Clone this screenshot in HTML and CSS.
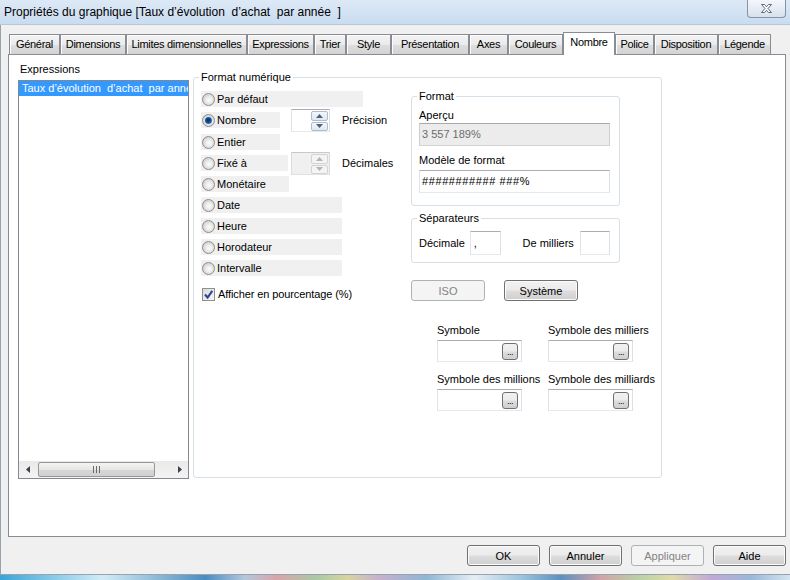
FILE: index.html
```html
<!DOCTYPE html>
<html lang="fr">
<head>
<meta charset="utf-8">
<title>Propriétés du graphique</title>
<link rel="stylesheet" href="styles.css">
</head>
<body>
<div class="window">
  <div class="titlebar">
    <span class="title">Propriétés du graphique [Taux d’évolution  d’achat  par année  ]</span>
    <button class="close" aria-label="Fermer">
      <svg width="13" height="11" viewBox="0 0 13 11"><path d="M1.5 1.5h3l2 2.3 2-2.3h3l-3.5 4 3.5 4h-3l-2-2.3-2 2.3h-3l3.5-4z" fill="#ffffff" stroke="#5b6b80" stroke-width="1" stroke-linejoin="round"/></svg>
    </button>
  </div>

  <div class="client">
    <div class="tabs">
      <div class="tab t-gen">Général</div>
      <div class="tab t-dim">Dimensions</div>
      <div class="tab t-lim">Limites dimensionnelles</div>
      <div class="tab t-exp">Expressions</div>
      <div class="tab t-tri">Trier</div>
      <div class="tab t-sty">Style</div>
      <div class="tab t-pre">Présentation</div>
      <div class="tab t-axe">Axes</div>
      <div class="tab t-cou">Couleurs</div>
      <div class="tab t-nom active">Nombre</div>
      <div class="tab t-pol">Police</div>
      <div class="tab t-dis">Disposition</div>
      <div class="tab t-leg">Légende</div>
    </div>

    <div class="panel">
      <div class="expr-col">
        <div class="lbl">Expressions</div>
        <div class="listbox">
          <div class="items">
            <div class="item sel">Taux d’évolution  d’achat  par année</div>
          </div>
          <div class="hscroll">
            <span class="sarrow"><svg width="4" height="7" viewBox="0 0 4 7"><path d="M4 0v7L0 3.5z" fill="#404040"/></svg></span>
            <span class="thumb"><svg width="7" height="7" viewBox="0 0 7 7"><path d="M0.5 0v7M3.5 0v7M6.5 0v7" stroke="#6a6a6a" stroke-width="1"/></svg></span>
            <span class="track"></span>
            <span class="sarrow"><svg width="4" height="7" viewBox="0 0 4 7"><path d="M0 0v7l4-3.5z" fill="#404040"/></svg></span>
          </div>
        </div>
      </div>

      <fieldset class="group main">
        <legend>Format numérique</legend>
        <div class="main-body">
          <div class="radios">
            <div class="row"><label class="opt w162"><span class="radio"></span>Par défaut</label></div>
            <div class="row spinrow">
              <label class="opt w79"><span class="radio on"></span>Nombre</label>
              <span class="spin">
                <span class="spin-btns">
                  <span class="sbtn"><svg width="7" height="4" viewBox="0 0 7 4"><path d="M0 4h7L3.5 0z" fill="#4d6185"/></svg></span>
                  <span class="sbtn"><svg width="7" height="4" viewBox="0 0 7 4"><path d="M0 0h7L3.5 4z" fill="#4d6185"/></svg></span>
                </span>
              </span>
              <span class="side">Précision</span>
            </div>
            <div class="row"><label class="opt w79"><span class="radio"></span>Entier</label></div>
            <div class="row spinrow">
              <label class="opt w87"><span class="radio"></span>Fixé à</label>
              <span class="spin disabled">
                <span class="spin-btns">
                  <span class="sbtn"><svg width="7" height="4" viewBox="0 0 7 4"><path d="M0 4h7L3.5 0z" fill="#b4b4b4"/></svg></span>
                  <span class="sbtn"><svg width="7" height="4" viewBox="0 0 7 4"><path d="M0 0h7L3.5 4z" fill="#b4b4b4"/></svg></span>
                </span>
              </span>
              <span class="side">Décimales</span>
            </div>
            <div class="row"><label class="opt w88"><span class="radio"></span>Monétaire</label></div>
            <div class="row"><label class="opt w141"><span class="radio"></span>Date</label></div>
            <div class="row"><label class="opt w141"><span class="radio"></span>Heure</label></div>
            <div class="row"><label class="opt w141"><span class="radio"></span>Horodateur</label></div>
            <div class="row"><label class="opt w141"><span class="radio"></span>Intervalle</label></div>
            <label class="check">
              <span class="cbox"><svg width="11" height="11" viewBox="0 0 11 11"><path d="M2 5.5l2.6 3L9.3 1.8" fill="none" stroke="#2a4694" stroke-width="2.1"/></svg></span>
              Afficher en pourcentage (%)
            </label>
          </div>

          <div class="right">
            <fieldset class="group fmt">
              <legend>Format</legend>
              <div class="flbl">Aperçu</div>
              <div class="tb ro">3 557 189%</div>
              <div class="flbl second">Modèle de format</div>
              <div class="tb pattern">########### ###%</div>
            </fieldset>

            <fieldset class="group sep">
              <legend>Séparateurs</legend>
              <div class="sep-row">
                <span class="sep-l1">Décimale</span>
                <span class="tb small w31">,</span>
                <span class="sep-l2">De milliers</span>
                <span class="tb small w30"></span>
              </div>
            </fieldset>

            <div class="btn-row">
              <button class="btn" disabled>ISO</button>
              <button class="btn">Système</button>
            </div>

            <div class="symbols">
              <div class="sym">
                <div class="slbl">Symbole</div>
                <div class="tb symbox"><span class="dots">...</span></div>
              </div>
              <div class="sym">
                <div class="slbl">Symbole des milliers</div>
                <div class="tb symbox"><span class="dots">...</span></div>
              </div>
              <div class="sym">
                <div class="slbl">Symbole des millions</div>
                <div class="tb symbox"><span class="dots">...</span></div>
              </div>
              <div class="sym">
                <div class="slbl">Symbole des milliards</div>
                <div class="tb symbox"><span class="dots">...</span></div>
              </div>
            </div>
          </div>
        </div>
      </fieldset>
    </div>

    <div class="footer">
      <button class="btn fbtn">OK</button>
      <button class="btn fbtn">Annuler</button>
      <button class="btn fbtn" disabled>Appliquer</button>
      <button class="btn fbtn">Aide</button>
    </div>
  </div>
</div>
<div class="taskbar"></div>
</body>
</html>
```

FILE: styles.css
```css
* { box-sizing: border-box; }
html, body { margin: 0; padding: 0; }
body {
  width: 790px;
  height: 580px;
  overflow: hidden;
  background: #f0f0f0;
  font-family: "Liberation Sans", Arial, sans-serif;
  font-size: 11px;
  color: #000;
}

.window { height: 575px; display: flex; flex-direction: column; }

/* title bar */
.titlebar {
  height: 25px;
  flex: none;
  display: flex;
  justify-content: space-between;
  align-items: flex-start;
  background: linear-gradient(#dde9f6, #c9dcf0);
  border-bottom: 1px solid #b9c6d4;
}
.title { font-size: 12px; line-height: 24px; padding-left: 4px; white-space: pre; }
.close {
  width: 39px;
  height: 18px;
  margin-right: 4px;
  padding: 0;
  border: 1px solid #8394aa;
  border-top: none;
  border-radius: 0 0 4px 4px;
  background: linear-gradient(#f4f7fb, #d7e1ec);
  display: flex;
  align-items: center;
  justify-content: center;
}

.client {
  flex: 1;
  display: flex;
  flex-direction: column;
  box-shadow: inset 1px 0 0 #9aa3ad;
  border-bottom: 1px solid #9aa3ad;
}

/* tabs */
.tabs { height: 29px; display: flex; align-items: flex-end; padding-left: 9px; }
.tab {
  height: 20px;
  line-height: 19px;
  padding: 0;
  text-align: center;
  border: 1px solid #898c95;
  border-bottom: none;
  background: linear-gradient(#f3f3f3, #ebebeb 50%, #dedede 51%, #d3d3d3);
  box-shadow: inset 1px 1px 0 #fcfcfc;
  white-space: nowrap;
  letter-spacing: -0.3px;
}
.tab.active {
  height: 23px;
  line-height: 18px;
  margin-bottom: -1px;
  background: #fff;
  box-shadow: none;
  position: relative;
  z-index: 1;
}
.t-gen { width: 51px; }
.t-dim { width: 66px; }
.t-lim { width: 121px; }
.t-exp { width: 67px; }
.t-tri { width: 32px; }
.t-sty { width: 45px; }
.t-pre { width: 78px; }
.t-axe { width: 39px; }
.t-cou { width: 55px; }
.t-nom { width: 52px; }
.t-pol { width: 39px; }
.t-dis { width: 64px; }
.t-leg { width: 53px; }

/* panel */
.panel {
  height: 483px;
  margin: 0 4px 0 8px;
  border: 1px solid #898c95;
  background: #fff;
  display: flex;
  align-items: flex-start;
  padding: 7px 0 0 9px;
}
.expr-col { width: 171px; }
.lbl { line-height: 14px; padding-left: 2px; }
.listbox {
  margin-top: 4px;
  height: 399px;
  border: 1px solid #828790;
  display: flex;
  flex-direction: column;
}
.items { flex: 1; overflow: hidden; }
.item { line-height: 15px; padding-left: 3px; white-space: pre; overflow: hidden; }
.item.sel { background: #3399ff; color: #fff; }
.hscroll { height: 17px; display: flex; align-items: center; background: linear-gradient(#e9e9e9, #f3f3f3); }
.sarrow { width: 17px; height: 17px; display: flex; align-items: center; justify-content: center; }
.thumb {
  width: 117px;
  height: 15px;
  margin-left: 2px;
  border: 1px solid #979797;
  border-radius: 2px;
  background: linear-gradient(#f4f4f4, #e6e6e6 50%, #d6d6d6 51%, #d0d0d0);
  display: flex;
  align-items: center;
  justify-content: center;
}
.track { flex: 1; }

/* group boxes */
.group {
  margin: 0;
  min-width: 0;
  border: 1px solid #d5dfe5;
  border-radius: 3px;
}
.group legend { line-height: 14px; padding: 0 2px; margin-left: -2px; }
.main {
  width: 469px;
  height: 408px;
  margin: 8px 0 0 4px;
  padding: 5px 0 0 7px;
}
.main-body { display: flex; align-items: flex-start; }

.radios { width: 210px; margin-top: 2px; }
.row { height: 16px; margin-bottom: 5px; display: flex; align-items: center; }
.radios .row:nth-child(2) { margin-bottom: 6px; }
.spinrow { display: grid; grid-template-columns: 90px 50px auto; grid-template-rows: 16px; align-items: center; }
.opt {
  height: 16px;
  display: flex;
  align-items: center;
  gap: 2px;
  padding-left: 1px;
  background: #f0f0f0;
  white-space: nowrap;
}
.w162 { width: 162px; }
.w79 { width: 79px; }
.w87 { width: 87px; }
.w88 { width: 88px; }
.w141 { width: 141px; }

.radio {
  width: 13px;
  height: 13px;
  flex: none;
  border-radius: 50%;
  border: 1px solid #8e8f8f;
  background: radial-gradient(circle at 55% 55%, #fdfdfd 0, #ececec 35%, #cfcfcf 75%, #bdbdbd 100%);
  display: flex;
  align-items: center;
  justify-content: center;
}
.radio.on::after {
  content: "";
  width: 7px;
  height: 7px;
  border-radius: 50%;
  background: radial-gradient(circle at 45% 45%, #0a2f5c 0, #164f8f 45%, #3e92d8 80%, #7cc3f5 100%);
}

.spin {
  width: 39px;
  height: 23px;
  margin: -3px 0 -4px;
  display: flex;
  justify-content: flex-end;
  padding: 1px;
  border: 1px solid;
  border-color: #abadb3 #dbdfe6 #e3e9ef #e2e3ea;
  background: #fff;
}
.spin.disabled { border-color: #c9c9c9 #dcdcdc #e0e0e0 #dcdcdc; background: #f0f0f0; }
.spin-btns { width: 17px; display: flex; flex-direction: column; gap: 1px; height: 20px; }
.sbtn {
  flex: 1;
  border: 1px solid #aebccd;
  border-radius: 2px;
  background: linear-gradient(#f5f8fb, #dfe7f0);
  display: flex;
  align-items: center;
  justify-content: center;
}
.spin.disabled .sbtn { border-color: #d3d3d3; background: #f4f4f4; }
.side { padding-left: 1px; }

.check { display: flex; align-items: center; gap: 3px; height: 16px; margin-top: 10px; padding-left: 1px; letter-spacing: -0.1px; }
.cbox {
  width: 13px;
  height: 13px;
  border: 1px solid #8e8f8f;
  background: linear-gradient(135deg, #dadada, #f7f7f7);
  display: flex;
  align-items: center;
  justify-content: center;
}

.right { width: 223px; }
.fmt { width: 209px; padding: 5px 9px 12px 7px; }
.flbl { line-height: 14px; }
.flbl.second { margin-top: 7px; }
.tb {
  height: 23px;
  line-height: 21px;
  padding: 0 2px;
  border: 1px solid;
  border-color: #abadb3 #dbdfe6 #e3e9ef #e2e3ea;
  background: #fff;
  white-space: pre;
}
.fmt .tb { margin-top: 1px; }
.fmt .tb.pattern { margin-top: 3px; letter-spacing: 0.6px; }
.tb.ro { background: #ececec; border-color: #a9a9a9 #cdcdcd #d3d3d3 #cdcdcd; color: #6d6d6d; }

.sep { width: 209px; margin-top: 5px; padding: 6px 9px 7px 7px; }
.sep-row { display: flex; align-items: center; }
.sep-l1 { width: 51px; }
.sep-l2 { width: 58px; margin-left: 22px; }
.tb.small { height: 24px; line-height: 22px; padding: 0 3px; }
.w31 { width: 31px; }
.w30 { width: 30px; }

.btn {
  height: 21px;
  width: 74px;
  padding: 0;
  font: inherit;
  color: #000;
  border: 1px solid #707070;
  border-radius: 3px;
  background: linear-gradient(#f2f2f2, #ebebeb 48%, #dddddd 52%, #cfcfcf);
  box-shadow: inset 0 0 0 1px #fbfbfb;
}
.btn:disabled { border-color: #adb2b5; background: #f4f4f4; color: #838383; box-shadow: none; }
.btn-row { display: flex; gap: 19px; margin-top: 17px; }

.symbols {
  display: grid;
  grid-template-columns: 111px 111px;
  row-gap: 10px;
  margin: 22px 0 0 26px;
}
.slbl { line-height: 14px; white-space: nowrap; }
.symbox {
  width: 85px;
  height: 22px;
  margin-top: 3px;
  display: flex;
  align-items: center;
  justify-content: flex-end;
  padding: 0 3px 0 0;
}
.dots {
  width: 16px;
  height: 17px;
  border: 1px solid #707070;
  border-radius: 3px;
  background: linear-gradient(#f2f2f2, #ebebeb 48%, #dddddd 52%, #cfcfcf);
  font-size: 9px;
  line-height: 16px;
  text-align: center;
  letter-spacing: -0.5px;
}

/* footer */
.footer { display: flex; justify-content: flex-end; gap: 9px; margin: 8px 4px 0 0; }
.fbtn { width: 73px; }

.taskbar {
  height: 5px;
  background: linear-gradient(90deg, #3aa4d8 0, #7fc6e6 6%, #d2ecf7 13%, #8cb9d6 20%, #4a8cc2 26%, #b4c8dc 31%, #d9a4aa 35%, #a9c9a4 40%, #d8d4a0 44%, #c6b0cf 48%, #8eb7d4 54%, #e6eef5 60%, #9bc4de 66%, #5c90bf 71%, #d1a3a8 76%, #b9d2a6 81%, #e0dba8 85%, #c2a9d6 90%, #9ab8d8 95%, #d4e4f0 100%);
}
```
